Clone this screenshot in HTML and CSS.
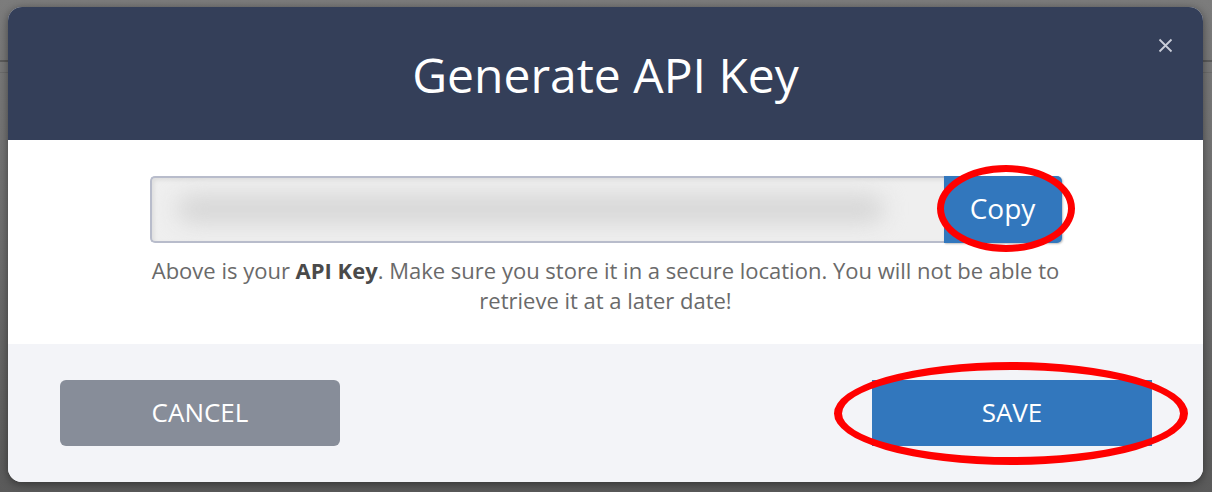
FILE: index.html
```html
<!DOCTYPE html>
<html>
<head>
<meta charset="utf-8">
<link rel="stylesheet" href="styles.css">
</head>
<body>
<div class="backdrop">
  <div class="modal">
    <header class="modal-header">
      <h1 class="title">Generate API Key</h1>
      <button class="close" aria-label="Close">
        <svg viewBox="0 0 15 15" width="15" height="15"><path d="M1.5 1.5 L13.5 13.5 M13.5 1.5 L1.5 13.5" stroke="#c9cdd8" stroke-width="1.8" fill="none"/></svg>
      </button>
    </header>
    <section class="modal-body">
      <div class="key-row">
        <div class="key-field"><span class="blur"></span></div>
        <div class="mark-wrap">
          <button class="copy">Copy</button>
          <span class="ring ring-copy"></span>
        </div>
      </div>
      <p class="note">Above is your <b>API Key</b>. Make sure you store it in a secure location. You will not be able to<br>retrieve it at a later date!</p>
    </section>
    <footer class="modal-footer">
      <button class="btn cancel">CANCEL</button>
      <div class="mark-wrap">
        <button class="btn save">SAVE</button>
        <span class="ring ring-save"></span>
      </div>
    </footer>
  </div>
</div>
</body>
</html>
```

FILE: styles.css
```css
* { box-sizing: border-box; }
html, body { margin: 0; height: 100%; }
body {
  font-family: "Open Sans", "Noto Sans", sans-serif;
  background:
    linear-gradient(to bottom, transparent 60px, #5b5b5b 60px, #5b5b5b 62px, transparent 62px, transparent 72px, #6c6c6c 72px, #6c6c6c 73px, transparent 73px),
    linear-gradient(to bottom, #7c7c7c 0%, #6e6e6e 50%, #5a5a5a 100%);
  overflow: hidden;
}
.backdrop {
  padding: 7px 0 0 8px;
}
.modal {
  width: 1195px;
  height: 475px;
  border-radius: 14px;
  overflow: hidden;
  display: flex;
  flex-direction: column;
  background: #f3f4f8;
  box-shadow: 0 2px 10px rgba(0,0,0,0.45);
}
.modal-header {
  position: relative;
  height: 133px;
  background: #343f59;
  display: flex;
  align-items: center;
  justify-content: center;
}
.title {
  margin: 0;
  font-weight: 400;
  font-size: 48px;
  color: #ffffff;
  line-height: 1;
  padding-top: 2px;
}
.close {
  position: absolute;
  top: 31px;
  right: 30px;
  width: 15px;
  height: 15px;
  padding: 0;
  border: 0;
  background: none;
  display: block;
}
.close svg { display: block; }
.modal-body {
  height: 204px;
  background: #ffffff;
  padding-top: 36px;
  display: flex;
  flex-direction: column;
  align-items: center;
}
.key-row {
  display: flex;
  width: 912px;
  height: 67px;
}
.key-field {
  flex: 1;
  position: relative;
  overflow: hidden;
  background: #efefef;
  border: 2px solid #b8bccb;
  border-right: 0;
  border-radius: 5px 0 0 5px;
  box-shadow: inset 2px 2px 4px rgba(0,0,0,0.08);
}
.blur {
  position: absolute;
  left: 25px;
  right: 60px;
  top: 17px;
  height: 28px;
  background: #d6d6d6;
  border-radius: 14px;
  filter: blur(11px);
}
.mark-wrap { position: relative; }
.copy {
  width: 118px;
  height: 67px;
  border: 0;
  border-radius: 0 5px 5px 0;
  background: #3277bd;
  color: #ffffff;
  font-family: "Open Sans", sans-serif;
  font-size: 28px;
  padding: 0 0 4px 0;
  box-shadow: 1px 1px 2px rgba(0,0,0,0.25);
}
.ring {
  position: absolute;
  border: 7px solid #ff0000;
  border-radius: 50%;
  pointer-events: none;
}
.ring-copy {
  left: -7px;
  right: -13px;
  top: -11px;
  bottom: -9px;
}
.note {
  margin: 12px 0 0;
  text-align: center;
  font-size: 22px;
  line-height: 30px;
  color: #6a6a6a;
}
.note b { color: #4a4a4a; font-weight: 700; }
.modal-footer {
  flex: 1;
  background: #f3f4f8;
  display: flex;
  justify-content: space-between;
  align-items: flex-start;
  padding: 36px 51px 0 52px;
}
.btn {
  width: 280px;
  height: 66px;
  border: 0;
  color: #ffffff;
  font-family: "Open Sans", sans-serif;
  font-size: 26px;
  padding: 0 0 2px 0;
}
.cancel {
  background: #878d99;
  border-radius: 6px;
}
.save {
  background: #3277bd;
  border-radius: 0;
  display: block;
}
.ring-save {
  border-width: 8px;
  left: -38px;
  right: -36px;
  top: -18px;
  bottom: -19px;
}
```
